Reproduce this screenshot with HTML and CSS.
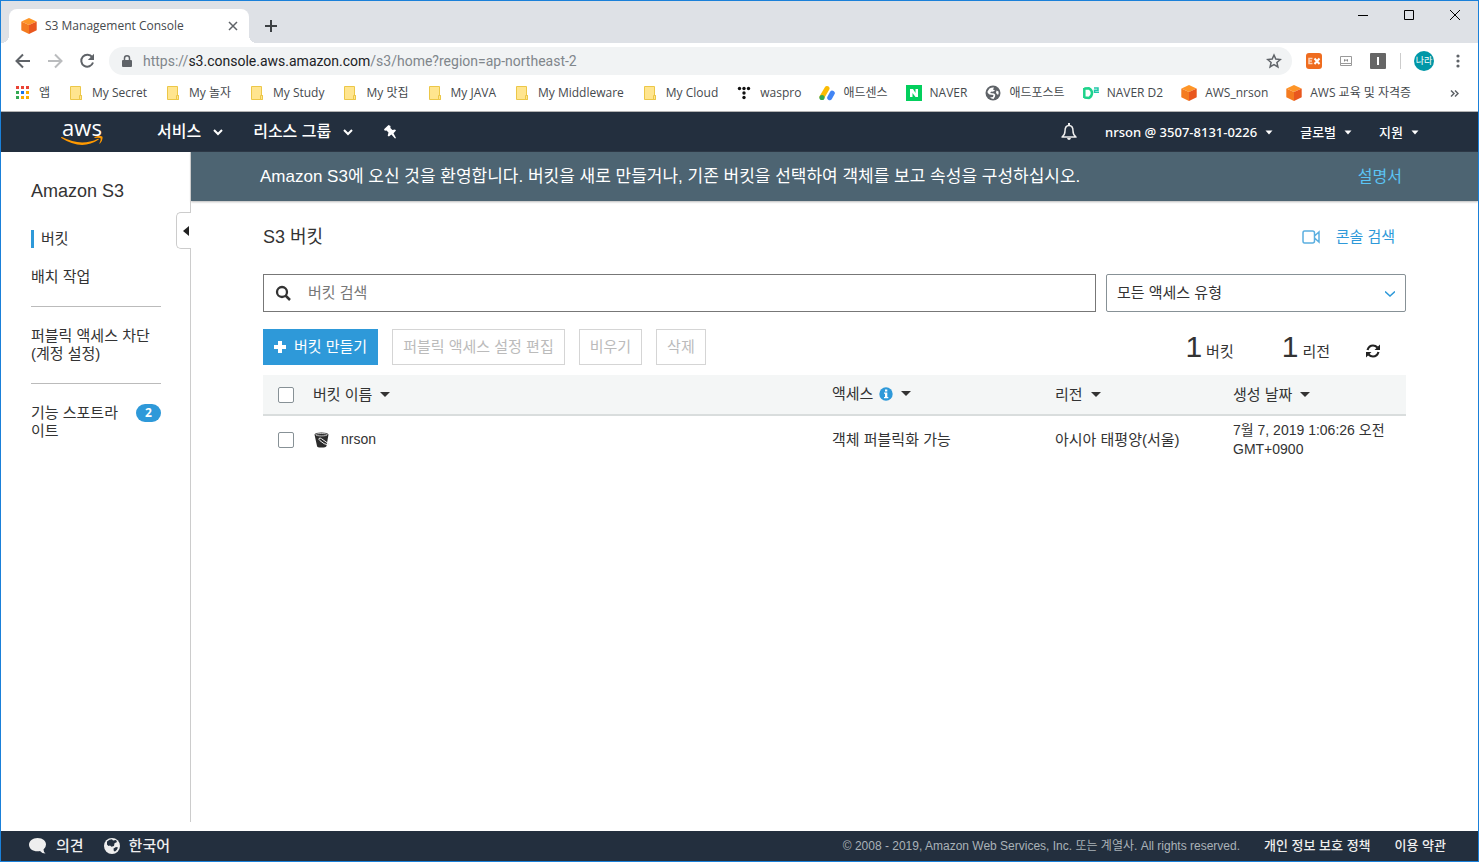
FILE: index.html
```html
<!DOCTYPE html>
<html lang="ko">
<head>
<meta charset="utf-8">
<title>S3 Management Console</title>
<link rel="stylesheet" href="styles.css">
</head>
<body>
<svg class="defs" aria-hidden="true">
  <symbol id="cube" viewBox="0 0 16 16"><path fill="#fe9527" d="M8 0l7.500 3.500L8 7 .5 3.500z"/><path fill="#f47b20" d="M.3 3.500L8 7v9L.3 12.300z"/><path fill="#e9571e" d="M15.700 3.500L8 7v9l7.700-3.700z"/></symbol>
  <symbol id="folder" viewBox="0 0 16 16"><path fill="#ffe58f" stroke="#ecc748" d="M2.500 1.500h10v9h1v4h-11z"/><path fill="#ffe58f" stroke="#ecc748" d="M11.500 14.500v-4h2v4z"/></symbol>
  <symbol id="chev" viewBox="0 0 10 7"><path fill="none" stroke="currentColor" stroke-width="2" d="M1 1l4 4 4-4"/></symbol>
  <symbol id="caret" viewBox="0 0 10 5"><path fill="currentColor" d="M0 0h10L5 5z"/></symbol>
  <symbol id="caret-sm" viewBox="0 0 8 5"><path fill="currentColor" d="M.5 .5h7l-3.500 4z"/></symbol>
  <symbol id="globe" viewBox="0 0 16 16"><circle cx="8" cy="8" r="7.500" fill="#5f6368"/><path fill="#fff" d="M4.500 3.500Q7 2 9 2.500L8 4.500l2 1q-1.500 1.500-3.500 1L5 8l4 .5q2 1 1 3L8.500 14q-2-.2-3.500-1.500l3-.5.5-2-4-.5Q2 8 2.500 6.500zM11.500 5.500l2 1q.5 2-.5 3.500l-2-2z"/></symbol>
</svg>

<header class="chrome">
  <div class="tabstrip">
    <div class="tab">
      <svg class="i16"><use href="#cube"/></svg>
      <span class="tab-title">S3 Management Console</span>
      <button class="icon-btn" aria-label="탭 닫기"><svg width="10" height="10" viewBox="0 0 10 10"><path stroke="#5f6368" stroke-width="1.500" d="M1 1l8 8M9 1L1 9"/></svg></button>
    </div>
    <button class="icon-btn new-tab" aria-label="새 탭"><svg width="12" height="12" viewBox="0 0 12 12"><path stroke="#3c4043" stroke-width="2" d="M6 0v12M0 6h12"/></svg></button>
    <div class="window-controls">
      <button class="icon-btn" aria-label="최소화"><svg width="12" height="12"><path stroke="#000" d="M1 6.500h10"/></svg></button>
      <button class="icon-btn" aria-label="최대화"><svg width="12" height="12"><path fill="none" stroke="#000" d="M1.500 1.500h9v9h-9z"/></svg></button>
      <button class="icon-btn" aria-label="닫기"><svg width="12" height="12"><path stroke="#000" d="M1 1l10 10M11 1L1 11"/></svg></button>
    </div>
  </div>

  <div class="toolbar">
    <div class="history">
      <button class="icon-btn" aria-label="뒤로"><svg class="i16" viewBox="0 0 16 16"><path fill="none" stroke="#5f6368" stroke-width="2" d="M15 8H2M8 1.500L1.500 8 8 14.500"/></svg></button>
      <button class="icon-btn" aria-label="앞으로"><svg class="i16" viewBox="0 0 16 16"><path fill="none" stroke="#babcbe" stroke-width="2" d="M1 8h13M8 1.500L14.500 8 8 14.500"/></svg></button>
      <button class="icon-btn" aria-label="새로고침"><svg class="i16" viewBox="0 0 16 16"><path fill="none" stroke="#5f6368" stroke-width="2" d="M13.200 4.200A6 6 0 1 0 14 9.500"/><path fill="#5f6368" d="M15 .8V7H8.800z"/></svg></button>
    </div>
    <div class="omnibox">
      <svg width="10" height="13" viewBox="0 0 10 13"><path fill="#5f6368" d="M1 5h8q1 0 1 1v5q0 1-1 1H1q-1 0-1-1V6q0-1 1-1z"/><path fill="none" stroke="#5f6368" stroke-width="1.500" d="M2.500 5V3.300a2.500 2.500 0 0 1 5 0V5"/></svg>
      <span class="url">https://<b>s3.console.aws.amazon.com</b>/s3/home?region=ap-northeast-2</span>
      <button class="icon-btn" aria-label="북마크"><svg class="i16" viewBox="0 0 16 16"><path fill="none" stroke="#5f6368" stroke-width="1.500" d="M8 2l1.800 4.100 4.500.4-3.400 3 1 4.400L8 11.600l-3.900 2.300 1-4.400-3.400-3 4.500-.4z"/></svg></button>
    </div>
    <div class="extensions">
      <button class="icon-btn" aria-label="Ex"><svg class="i16" viewBox="0 0 16 16"><rect width="16" height="16" rx="3" fill="#ef6c1f"/><path fill="none" stroke="#fbd0b4" stroke-width="1.500" d="M6.500 5.500H3v5h3.500M3 8h3"/><path stroke="#fff" stroke-width="2" d="M8.500 5.500l5 5.500M13.500 5.500l-5 5.500"/></svg></button>
      <button class="icon-btn" aria-label="확장 프로그램"><svg class="i16" viewBox="0 0 16 16"><path fill="#fff" stroke="#999" d="M2.500 3.500h11v7h-11zM2.500 10.500h11v2h-11z"/><path fill="none" stroke="#888" d="M6.500 8.500v-2l1.500 1 1.500-1v2"/></svg></button>
      <button class="icon-btn" aria-label="확장 프로그램"><svg class="i16" viewBox="0 0 16 16"><rect width="16" height="16" rx="1" fill="#666"/><path fill="#fff" d="M7 4h2v8H7z"/></svg></button>
      <span class="divider"></span>
      <button class="avatar">나라</button>
      <button class="icon-btn" aria-label="메뉴"><svg class="i16" viewBox="0 0 16 16"><g fill="#5f6368"><circle cx="8" cy="3" r="1.600"/><circle cx="8" cy="8" r="1.600"/><circle cx="8" cy="13" r="1.600"/></g></svg></button>
    </div>
  </div>

  <nav class="bookmarks" aria-label="북마크">
    <a href="#"><svg class="i16" viewBox="0 0 16 16"><path fill="#ea4335" d="M1 1h3v3H1zM6 1h3v3H6zM11 1h3v3h-3z"/><path fill="#34a853" d="M1 6h3v3H1zM1 11h3v3H1z"/><path fill="#1a73e8" d="M6 6h3v3H6z"/><path fill="#fbab00" d="M11 6h3v3h-3zM6 11h3v3H6zM11 11h3v3h-3z"/></svg>앱</a>
    <a href="#"><svg class="i16"><use href="#folder"/></svg>My Secret</a>
    <a href="#"><svg class="i16"><use href="#folder"/></svg>My 놀자</a>
    <a href="#"><svg class="i16"><use href="#folder"/></svg>My Study</a>
    <a href="#"><svg class="i16"><use href="#folder"/></svg>My 맛집</a>
    <a href="#"><svg class="i16"><use href="#folder"/></svg>My JAVA</a>
    <a href="#"><svg class="i16"><use href="#folder"/></svg>My Middleware</a>
    <a href="#"><svg class="i16"><use href="#folder"/></svg>My Cloud</a>
    <a href="#"><svg class="i16" viewBox="0 0 16 16"><g fill="#111"><circle cx="3.500" cy="3.500" r="1.700"/><circle cx="8" cy="3.500" r="1.700"/><circle cx="12.500" cy="3.500" r="1.700"/><circle cx="8" cy="8" r="1.700"/><circle cx="8" cy="12.500" r="1.700"/></g></svg>waspro</a>
    <a href="#"><svg class="i16" viewBox="0 0 16 16"><g stroke-width="5" stroke-linecap="round"><path stroke="#fbbc04" d="M3 12L8 3.500"/><path stroke="#4285f4" d="M10.700 12.700l2.600-4.600"/></g><circle cx="3" cy="12.500" r="2.600" fill="#34a853"/></svg>애드센스</a>
    <a href="#"><svg class="i16" viewBox="0 0 16 16"><path fill="#03cf5d" d="M0 0h16v16H0z"/><path fill="#fff" d="M4 4h3l2.500 4V4H12v8H9.500L6.500 8v4H4z"/></svg>NAVER</a>
    <a href="#"><svg class="i16"><use href="#globe"/></svg>애드포스트</a>
    <a href="#"><svg class="i16" viewBox="0 0 16 16"><path fill="none" stroke="#1ed38b" stroke-width="2.500" d="M1.300 3v10M1.300 3.500L6 3.300q3 1.500 3 4.700t-3 5l-4.700-.5"/><path fill="none" stroke="#1fc8a9" stroke-width="1.500" d="M11 3h4v2.200h-3.500v2H16"/></svg>NAVER D2</a>
    <a href="#"><svg class="i16"><use href="#cube"/></svg>AWS_nrson</a>
    <a href="#"><svg class="i16"><use href="#cube"/></svg>AWS 교육 및 자격증</a>
    <button class="icon-btn more" aria-label="더보기"><svg width="9" height="7" viewBox="0 0 9 7"><path fill="none" stroke="#5f6368" stroke-width="1.500" d="M1 .5l3 3-3 3M5 .5l3 3-3 3"/></svg></button>
  </nav>
</header>

<nav class="aws-nav" aria-label="AWS">
  <a class="logo" href="#" aria-label="AWS 홈"><span>aws</span><svg width="42" height="10" viewBox="0 0 42 10"><path fill="#ff9900" d="M0 1.300q.3-.6 1-.2Q20 11 37 2.700q1.200-.3.700.8Q21 15 .3 2z"/><path fill="#ff9900" d="M33.500 1Q38-1 41.300.5q1.200 3-2.300 7-.8.500-.5-.5 1.600-3.500 1-4.700Q38.200 1.300 34 2q-1-.2-.5-1z"/></svg></a>
  <button class="nav-main">서비스<svg width="10" height="7"><use href="#chev"/></svg></button>
  <button class="nav-main">리소스 그룹<svg width="10" height="7"><use href="#chev"/></svg></button>
  <button class="icon-btn" aria-label="고정"><svg width="14" height="14" viewBox="0 0 14 14"><path fill="#fff" d="M5.500 0L1 4.300l.8 1.500 1.700-.3 2 2-.8 3.200 1.200.9 2.500-2.200 3.600 4.100 1-.5-2.500-4.800L13 5.600l-1-1.200-2.600.5-2-1.900L7.500 1z"/></svg></button>
  <div class="nav-right">
    <button class="icon-btn bell" aria-label="알림"><svg width="16" height="18" viewBox="0 0 16 18"><path fill="none" stroke="#eee" stroke-width="1.500" stroke-linejoin="round" d="M1 14q3-2 3-6 0-5.500 4-5.500T12 8q0 4 3 6z"/><path fill="#eee" d="M7 0h2v3H7zM6 15h4q-.5 2-2 2t-2-2z"/></svg></button>
    <button>nrson @ 3507-8131-0226<svg width="8" height="5"><use href="#caret-sm"/></svg></button>
    <button>글로벌<svg width="8" height="5"><use href="#caret-sm"/></svg></button>
    <button>지원<svg width="8" height="5"><use href="#caret-sm"/></svg></button>
  </div>
</nav>

<div class="workspace">
  <aside class="sidebar">
    <button class="handle" aria-label="사이드바 접기"><svg width="6" height="10"><path fill="#222" d="M6 0v10L0 5z"/></svg></button>
    <h2>Amazon S3</h2>
    <a class="side-link active" href="#">버킷</a>
    <a class="side-link" href="#">배치 작업</a>
    <hr>
    <a class="side-link" href="#">퍼블릭 액세스 차단<br>(계정 설정)</a>
    <hr>
    <a class="side-link spotlight" href="#"><span>기능 스포트라<br>이트</span><span class="badge">2</span></a>
  </aside>

  <main>
    <div class="banner"><p>Amazon S3에 오신 것을 환영합니다. 버킷을 새로 만들거나, 기존 버킷을 선택하여 객체를 보고 속성을 구성하십시오.</p><a href="#">설명서</a></div>
    <div class="content">
      <div class="title-row">
        <h1>S3 버킷</h1>
        <a href="#"><svg width="18" height="14" viewBox="0 0 18 14"><path fill="none" stroke="#5bafe0" stroke-width="1.500" d="M2.500 1h8q2 0 2 2v8q0 2-2 2h-8q-1.500 0-1.500-2V3q0-2 1.500-2zM12.500 6l4.500-4v10l-4.500-4"/></svg>콘솔 검색</a>
      </div>
      <div class="filters">
        <label class="search"><svg class="i16" viewBox="0 0 16 16"><circle cx="7" cy="7" r="5" fill="none" stroke="#333" stroke-width="2.300"/><path stroke="#333" stroke-width="2.500" d="M10.500 10.500l4.500 4.500"/></svg><input type="text" placeholder="버킷 검색" aria-label="버킷 검색"></label>
        <div class="select"><select aria-label="액세스 유형"><option>모든 액세스 유형</option></select><svg width="10" height="6" viewBox="0 0 10 6"><path fill="none" stroke="#2e99d9" stroke-width="1.500" d="M0 .5l5 4.500 5-4.500"/></svg></div>
      </div>
      <div class="actions">
        <button class="btn primary"><svg width="12" height="12" viewBox="0 0 12 12"><path stroke="#fff" stroke-width="4" d="M6 0v12M0 6h12"/></svg>버킷 만들기</button>
        <button class="btn" disabled>퍼블릭 액세스 설정 편집</button>
        <button class="btn" disabled>비우기</button>
        <button class="btn" disabled>삭제</button>
        <div class="stats">
          <span><strong>1</strong>버킷</span>
          <span><strong>1</strong>리전</span>
          <button class="icon-btn" aria-label="새로고침"><svg width="14" height="14" viewBox="0 0 14 14"><path fill="none" stroke="#222" stroke-width="2.200" d="M1.500 6Q3 1.500 7 1.500q2.500 0 4.500 2M12.500 8Q11 12.500 7 12.500q-2.500 0-4.500-2"/><path fill="#222" d="M14 .5V6H8.500zM0 13.500V8h5.500z"/></svg></button>
        </div>
      </div>
      <table>
        <colgroup><col class="c-check"><col><col class="c-access"><col class="c-region"><col class="c-date"></colgroup>
        <thead><tr>
          <th><input type="checkbox" aria-label="모두 선택"></th>
          <th>버킷 이름<svg width="10" height="5"><use href="#caret"/></svg></th>
          <th>액세스<svg class="info" width="14" height="14" viewBox="0 0 14 14"><circle cx="7" cy="7" r="6.700" fill="#2e99d9"/><path fill="#fff" d="M6 2.500h2.300v2H6zM5 5.500h3.300V10H9.300v1.300H5V10h1V6.800H5z"/></svg><svg width="10" height="5"><use href="#caret"/></svg></th>
          <th>리전<svg width="10" height="5"><use href="#caret"/></svg></th>
          <th>생성 날짜<svg width="10" height="5"><use href="#caret"/></svg></th>
        </tr></thead>
        <tbody><tr>
          <td><input type="checkbox" aria-label="nrson 선택"></td>
          <td><a class="bucket" href="#"><svg class="i16" viewBox="0 0 16 16"><path fill="#2b2b2b" d="M.5 2.500Q1 .5 7.500.5t7 2L12.500 14q-.5 1.500-5 1.500T3 14z"/><ellipse cx="7.500" cy="2.700" rx="5.800" ry="1.200" fill="none" stroke="#ddd" stroke-width=".8"/><path fill="none" stroke="#eee" d="M5 6.500q1-1 2.500.2l7 5q.8 1-1 1-3 0-7.500-4Q4.500 7.500 5 6.500z"/></svg><span class="latin">nrson</span></a></td>
          <td>객체 퍼블릭화 가능</td>
          <td>아시아 태평양(서울)</td>
          <td class="latin">7월 7, 2019 1:06:26 오전<br>GMT+0900</td>
        </tr></tbody>
      </table>
    </div>
  </main>
</div>

<footer>
  <button><svg width="18" height="16" viewBox="0 0 18 16"><path fill="#eee" d="M8.500 0C14 0 17 3 17 6.500q0 3-2.500 5 0 2.500 2 4Q13 15.500 11 13q-1 .3-2.500.3C3.500 13.300 0 10.300 0 6.700S3.500 0 8.500 0z"/></svg>의견</button>
  <button><svg class="i16" viewBox="0 0 16 16"><circle cx="8" cy="8" r="8" fill="#eee"/><path fill="#232f3e" d="M3 3.500Q5.500 1.300 8 1.300l1 1.200 3-.5 1 2-2.500 1.200L10 8 7.500 8.800 6 7.500 4.500 8 3 6.500zM9.500 10.500L12 9l2 .5q-.8 2.500-3 4L9.800 13z"/></svg>한국어</button>
  <div class="legal">
    <small>© 2008 - 2019, Amazon Web Services, Inc. 또는 계열사. All rights reserved.</small>
    <a href="#">개인 정보 보호 정책</a>
    <a href="#">이용 약관</a>
  </div>
</footer>
</body>
</html>
```
FILE: styles.css
```css
* { box-sizing: border-box; }
body {
  margin: 0;
  min-height: 100vh;
  display: flex;
  flex-direction: column;
  border: 1px solid #1a80d9;
  background: #fff;
  color: #333;
  font: 15px/18px "Liberation Sans", "Noto Sans CJK KR", sans-serif;
}
.defs { position: absolute; width: 0; height: 0; }
svg { display: block; flex: none; }
.i16 { width: 16px; height: 16px; }
a { color: inherit; text-decoration: none; }
button { border: 0; padding: 0; margin: 0; background: none; color: inherit; font: inherit; white-space: nowrap; }
h1, h2, p { margin: 0; font-weight: 400; }
.icon-btn { display: flex; align-items: center; justify-content: center; }

/* browser window */
.chrome { font: 12px/16px "Open Sans", "Noto Sans CJK KR", sans-serif; border-bottom: 1px solid #b3b3b3; }
.tabstrip { display: flex; align-items: flex-end; height: 42px; padding-left: 8px; background: #dee1e6; }
.tab {
  position: relative;
  display: flex;
  align-items: center;
  gap: 8px;
  width: 240px;
  height: 34px;
  padding: 0 11px 0 12px;
  border-radius: 8px 8px 0 0;
  background: #fff;
}
.tab::before, .tab::after { content: ""; position: absolute; bottom: 0; width: 8px; height: 8px; }
.tab::before { left: -8px; background: radial-gradient(circle at 0 0, transparent 8px, #fff 8px); }
.tab::after { right: -8px; background: radial-gradient(circle at 100% 0, transparent 8px, #fff 8px); }
.tab-title { flex: 1; color: #45494d; }
.new-tab { width: 44px; height: 34px; }
.window-controls { display: flex; align-self: flex-start; margin-left: auto; }
.window-controls .icon-btn { width: 46px; height: 28px; }
.toolbar { display: flex; align-items: center; height: 36px; padding: 0 12px 0 14px; }
.history { display: flex; gap: 16px; margin-right: 14px; }
.omnibox {
  flex: 1;
  display: flex;
  align-items: center;
  gap: 11px;
  height: 28px;
  padding: 0 10px 0 13px;
  border-radius: 14px;
  background: #f1f3f4;
}
.url { flex: 1; color: #80868b; font-family: Roboto, sans-serif; font-size: 14px; }
.url b { color: #202124; font-weight: 400; }
.extensions { display: flex; align-items: center; gap: 16px; padding-left: 14px; }
.divider { width: 1px; height: 16px; margin: 0 -3px 0 -2px; background: #ccc; }
.avatar { width: 20px; height: 20px; border-radius: 50%; background: #0097a7; color: #fff; font-size: 9px; }
.bookmarks { display: flex; align-items: center; gap: 18px; height: 32px; padding: 0 19px 4px 14px; color: #45494d; white-space: nowrap; }
.bookmarks a { display: flex; align-items: center; gap: 8px; }
.more { margin-left: auto; }

/* AWS navigation */
.aws-nav { display: flex; align-items: center; height: 40px; padding: 0 59px 0 60px; background: #232f3e; color: #fff; }
.logo { display: flex; flex-direction: column; align-items: center; margin-right: 54px; font: 500 22px/16px "Open Sans", sans-serif; }
.logo svg { margin-top: 1px; }
.nav-main { display: flex; align-items: center; gap: 12px; margin-right: 30px; font-size: 16px; font-weight: 500; }
.nav-right { display: flex; align-items: center; gap: 27px; margin-left: auto; font: 500 13px/18px "Noto Sans", "Noto Sans CJK KR", sans-serif; }
.nav-right button { display: flex; align-items: center; gap: 8px; }
.nav-right .bell { margin-right: 1px; }

/* page */
.workspace { flex: 1; display: flex; }
.sidebar { position: relative; width: 190px; margin-bottom: 9px; padding: 29px 29px 0 30px; border-right: 1px solid #ccc; }
.handle {
  position: absolute;
  top: 60px;
  right: -1px;
  display: flex;
  align-items: center;
  justify-content: flex-end;
  width: 15px;
  height: 37px;
  padding-right: 2px;
  border: 1px solid #ccc;
  border-right: 0;
  border-radius: 5px 0 0 5px;
  background: #fff;
}
.sidebar h2 { margin-bottom: 29px; font-size: 18px; line-height: 20px; }
.side-link { display: block; margin-bottom: 20px; white-space: nowrap; }
.active { padding-left: 7px; border-left: 3px solid #2e99d9; }
.sidebar hr { margin: 0 0 20px; border: 0; border-top: 1px solid #bbb; }
.spotlight { display: flex; align-items: flex-start; justify-content: space-between; }
.badge { width: 25px; border-radius: 9px; background: #2e99d9; color: #fff; font: 700 12px/18px "Open Sans", sans-serif; text-align: center; }
main { flex: 1; min-width: 0; }
.banner { display: flex; align-items: center; justify-content: space-between; height: 49px; padding: 0 76px 0 69px; background: #4d6472; box-shadow: 0 1px 2px #bbb; color: #fff; font-size: 17px; }
.banner a { color: #5bc4f5; font-size: 16px; }
.content { padding: 24px 72px; }
.title-row { display: flex; align-items: center; justify-content: space-between; height: 24px; margin-bottom: 25px; }
h1 { font-size: 18px; }
.title-row a { display: flex; align-items: center; gap: 16px; margin-right: 11px; color: #2e99d9; }
.filters { display: flex; gap: 10px; margin-bottom: 17px; }
.search { flex: 1; display: flex; align-items: center; gap: 17px; height: 38px; padding: 0 11px; border: 1px solid #777; }
.search input { flex: 1; border: 0; outline: 0; padding: 0; background: none; font: inherit; }
.search input::placeholder { color: #777; }
.select { position: relative; width: 300px; }
.select select { width: 100%; height: 38px; padding: 0 10px; border: 1px solid #879196; border-radius: 2px; background: #fff; color: #333; font: inherit; appearance: none; }
.select svg { position: absolute; top: 17px; right: 11px; pointer-events: none; }
.actions { display: flex; align-items: center; gap: 14px; margin-bottom: 10px; }
.btn { display: flex; align-items: center; gap: 8px; height: 36px; padding: 0 10px; border: 1px solid #d5d5d5; color: #bbb; }
.primary { border-color: #2e99d9; background: #2e99d9; color: #fff; }
.stats { display: flex; align-items: baseline; gap: 48px; margin-left: auto; padding-right: 26px; }
.stats strong { margin-right: 4px; font-size: 30px; font-weight: 400; line-height: 36px; }
.stats .icon-btn { align-self: center; margin: 8px 0 0 -12px; }
table { width: 100%; table-layout: fixed; border-collapse: collapse; }
.c-check { width: 50px; }
.c-access { width: 223px; }
.c-region { width: 178px; }
.c-date { width: 173px; }
th, td { padding: 0; text-align: left; font-weight: 400; white-space: nowrap; }
thead { background: #f4f6f6; border-bottom: 2px solid #d9dddd; }
th { height: 40px; }
th svg { display: inline-block; margin: 0 0 3px 8px; vertical-align: middle; }
.info { margin-left: 6px; }
td { height: 48px; line-height: 19px; }
td:first-child, th:first-child { padding-left: 15px; }
input[type="checkbox"] { display: block; width: 16px; height: 16px; margin: 0; border: 1px solid #879196; border-radius: 2px; background: #fff; appearance: none; }
.bucket { display: flex; align-items: center; gap: 11px; padding-left: 1px; }
.latin { font-size: 14px; }

footer { display: flex; align-items: center; gap: 20px; height: 30px; padding: 0 32px 0 28px; background: #232f3e; color: #eee; font-weight: 500; }
footer button { display: flex; align-items: center; gap: 9px; }
.legal { display: flex; align-items: center; gap: 24px; margin-left: auto; font-size: 13px; }
.legal small { color: #aab2b8; font-size: 12px; font-weight: 400; }
```
